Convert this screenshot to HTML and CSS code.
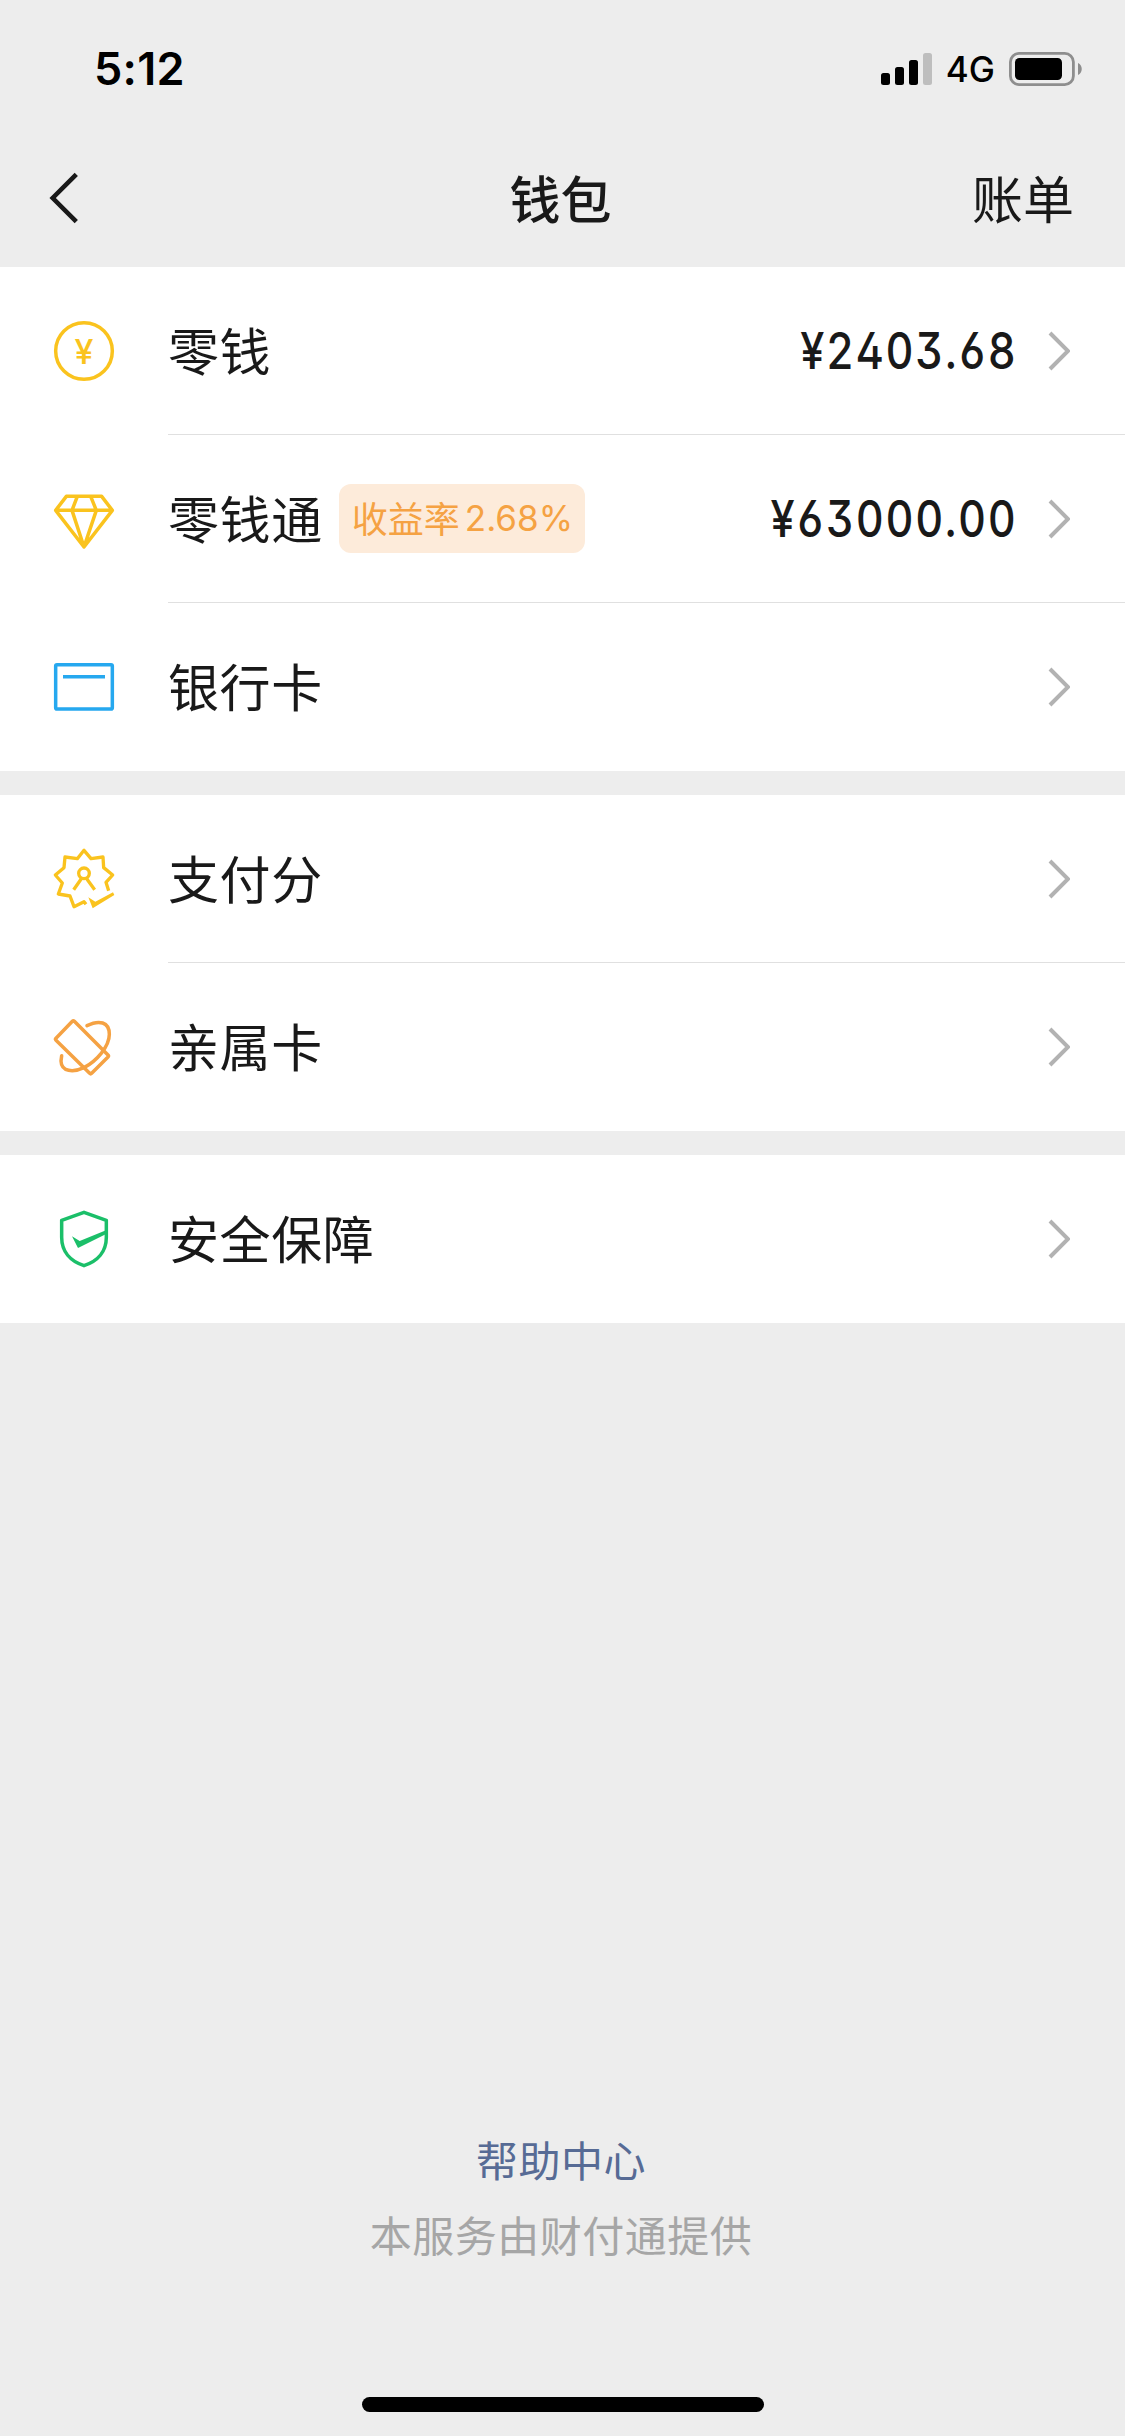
FILE: index.html
```html
<!DOCTYPE html>
<html lang="zh-CN">
<head>
<meta charset="utf-8">
<title>钱包</title>
<link rel="stylesheet" href="styles.css">
</head>
<body>
<div class="screen">
  <div class="status-bar">
    <span class="time">5:12</span>
    <div class="status-right">
      <svg class="signal" width="51" height="32" viewBox="0 0 51 32">
        <rect x="0" y="20" width="9" height="12" rx="2.5"/>
        <rect x="14" y="14" width="9" height="18" rx="2.5"/>
        <rect x="28" y="7" width="9" height="25" rx="2.5"/>
        <rect x="42" y="0" width="9" height="32" rx="2.5" fill="#bebebe"/>
      </svg>
      <span class="network">4G</span>
      <svg class="battery" width="74" height="34" viewBox="0 0 74 34">
        <rect x="1.4" y="1.4" width="63" height="31.2" rx="8.6" fill="none" stroke="#8e8e8e" stroke-width="2.8"/>
        <rect x="6" y="6" width="47" height="22" rx="4.5"/>
        <path d="M69 11C74 13 74 21 69 23Z" fill="#8e8e8e"/>
      </svg>
    </div>
  </div>

  <header class="nav">
    <svg class="back" width="40" height="54" viewBox="0 0 40 54"><path d="M29.3 3.3L5.7 27L29.3 50.7"/></svg>
    <h1 class="title">钱包</h1>
    <span class="bill">账单</span>
  </header>

  <main>
    <section class="group">
      <div class="row">
        <svg class="icon yellow" viewBox="54 75 216 216">
          <circle cx="162" cy="183" r="85" stroke-width="10.5"/>
          <text class="yen" x="162" y="222" text-anchor="middle">¥</text>
        </svg>
        <div class="body">
          <span class="label">零钱</span>
          <span class="amount">¥2403.68</span>
          <svg class="chevron" viewBox="0 0 22 40"><path d="M2 2L20 20L2 38"/></svg>
        </div>
      </div>
      <div class="row">
        <svg class="icon yellow" viewBox="54 579 216 216">
          <path d="M109 619H215L247 661L162 771L77 661Z M77 661H247 M142 619L126 661L162 771L199 661L182 619"/>
        </svg>
        <div class="body">
          <span class="label">零钱通</span>
          <span class="rate">收益率<span class="rate-value">2.68%</span></span>
          <span class="amount">¥63000.00</span>
          <svg class="chevron" viewBox="0 0 22 40"><path d="M2 2L20 20L2 38"/></svg>
        </div>
      </div>
      <div class="row">
        <svg class="icon blue" viewBox="54 93 216 216">
          <rect x="77" y="134" width="170" height="133" rx="4"/>
          <path d="M99 170H225"/>
        </svg>
        <div class="body">
          <span class="label">银行卡</span>
          <svg class="chevron" viewBox="0 0 22 40"><path d="M2 2L20 20L2 38"/></svg>
        </div>
      </div>
    </section>

    <section class="group">
      <div class="row">
        <svg class="icon yellow" viewBox="54 669 216 216">
          <path class="thin" d="M236 812L228 787L248 765L221 743L219 711L183 716L162 691L142 716L105 711L102 743L76 765L97 789L85 822L120 828L132 860L162 845L168 853"/>
          <circle class="thin" cx="162" cy="760" r="16"/>
          <path class="thin" d="M155 775L131 809M169 775L194 809"/>
          <path class="solid" d="M175 832L196 845L249 817L253 825L188 865Z"/>
        </svg>
        <div class="body">
          <span class="label">支付分</span>
          <svg class="chevron" viewBox="0 0 22 40"><path d="M2 2L20 20L2 38"/></svg>
        </div>
      </div>
      <div class="row">
        <svg class="icon orange" viewBox="54 213 216 216">
          <path d="M127 244Q130 241 133 244L234 345Q237 348 234 351L185 400Q182 403 179 400L78 301Q75 298 78 295Z"/>
          <path stroke-linecap="round" d="M171 257C207 239 238 245 238 283C238 320 200 363 162 383C130 398 94 396 93 363L95 347"/>
        </svg>
        <div class="body">
          <span class="label">亲属卡</span>
          <svg class="chevron" viewBox="0 0 22 40"><path d="M2 2L20 20L2 38"/></svg>
        </div>
      </div>
    </section>

    <section class="group">
      <div class="row">
        <svg class="icon green" viewBox="54 789 216 216">
          <path d="M162 817L229 841V892C229 935 203 964 162 977C121 964 95 935 95 892V841Z"/>
          <path class="solid" d="M126 889L149 903L230 870V881L144 924Z"/>
        </svg>
        <div class="body">
          <span class="label">安全保障</span>
          <svg class="chevron" viewBox="0 0 22 40"><path d="M2 2L20 20L2 38"/></svg>
        </div>
      </div>
    </section>
  </main>

  <footer class="footer">
    <a class="help">帮助中心</a>
    <p class="provider">本服务由财付通提供</p>
    <div class="home-indicator"></div>
  </footer>
</div>
</body>
</html>
```
FILE: styles.css
```css
* {
  box-sizing: border-box;
}

body {
  margin: 0;
  background: #ededed;
  color: #191919;
  font-family: "Noto Sans CJK SC", sans-serif;
}

.screen {
  width: 1125px;
  height: 2436px;
  display: flex;
  flex-direction: column;
}

.status-bar {
  height: 132px;
  padding: 6px 42px 0 94px;
  display: flex;
  align-items: center;
  justify-content: space-between;
  color: #000;
  font-family: Inter, sans-serif;
}

.time {
  font-size: 45px;
  font-weight: 600;
  line-height: 60px;
  letter-spacing: 0.3px;
}

.status-right {
  display: flex;
  align-items: center;
}

.network {
  margin: 0 14px;
  font-size: 35px;
  font-weight: 500;
  line-height: 40px;
}

.nav {
  height: 135px;
  padding: 0 51px 0 47px;
  display: grid;
  grid-template-columns: 1fr auto 1fr;
  align-items: center;
}

.back {
  margin-bottom: 3px;
  fill: none;
  stroke: #191919;
  stroke-width: 4.6;
}

.title,
.bill {
  margin: 0;
  padding-bottom: 6px;
  font-size: 51px;
  line-height: 72px;
}

.title {
  font-weight: 500;
}

.bill {
  justify-self: end;
}

.group {
  margin-bottom: 24px;
  background: #fff;
}

.row {
  height: 168px;
  padding-left: 48px;
  display: flex;
  align-items: center;
  gap: 48px;
}

.icon {
  width: 72px;
  height: 72px;
  flex: none;
  fill: none;
  stroke: currentColor;
  stroke-width: 10.5;
  stroke-linejoin: round;
}

.icon .thin {
  stroke-width: 10;
}

.icon .solid,
.icon .yen {
  fill: currentColor;
  stroke: none;
}

.yen {
  font-family: Inter, sans-serif;
  font-size: 102px;
  font-weight: 500;
}

.yellow {
  color: #fac31e;
}

.blue {
  color: #26a8ef;
}

.orange {
  color: #f5a243;
}

.green {
  color: #1bbf69;
}

.body {
  flex: 1;
  height: 100%;
  padding-right: 55px;
  display: flex;
  align-items: center;
}

.row:not(:last-child) .body {
  border-bottom: 1px solid #e0e0e0;
}

.label {
  padding-bottom: 4px;
  font-size: 51px;
  line-height: 72px;
  letter-spacing: 0.6px;
}

.rate {
  width: 246px;
  height: 69px;
  margin-left: 16px;
  padding: 0 0 3px 13px;
  display: flex;
  align-items: center;
  border-radius: 12px;
  background: #fdebda;
  color: #f5a243;
  font-size: 36px;
  line-height: 60px;
}

.rate-value {
  margin-left: 5px;
  padding-top: 2px;
  font-family: Inter, sans-serif;
  font-size: 35px;
}

.amount {
  margin-left: auto;
  font-family: Inter, sans-serif;
  font-size: 51px;
  font-weight: 500;
  line-height: 60px;
  letter-spacing: 1.9px;
  font-feature-settings: "ss01", "cv09", "tnum";
  transform: scaleX(0.85);
  transform-origin: right center;
}

.chevron {
  width: 22px;
  height: 40px;
  margin-left: auto;
  fill: none;
  stroke: #b2b2b2;
  stroke-width: 4;
}

.amount + .chevron {
  margin-left: 30px;
}

.footer {
  margin-top: auto;
  padding-bottom: 24px;
  display: flex;
  flex-direction: column;
  align-items: center;
  font-size: 42px;
  line-height: 60px;
  letter-spacing: 0.5px;
}

.help,
.provider {
  padding-right: 3px;
}

.help {
  color: #576b95;
}

.provider {
  margin: 15px 0 133px;
  color: #a6a6a6;
}

.home-indicator {
  width: 402px;
  height: 15px;
  border-radius: 8px;
  background: #000;
}
```
